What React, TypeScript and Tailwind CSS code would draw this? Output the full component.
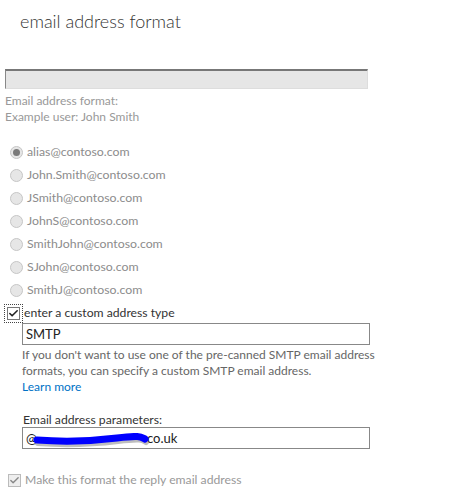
import { Check } from 'lucide-react'

const formats = [
  'alias@contoso.com',
  'John.Smith@contoso.com',
  'JSmith@contoso.com',
  'JohnS@contoso.com',
  'SmithJohn@contoso.com',
  'SJohn@contoso.com',
  'SmithJ@contoso.com',
]

function Radio({ label, checked }: { label: string; checked?: boolean }) {
  return (
    <div className="flex items-center h-[23px]">
      <span className="w-[13px] h-[13px] rounded-full border border-[#c6c6c6] bg-[#e6e6e6] flex items-center justify-center ml-[10px] mr-[4px]">
        {checked && <span className="w-[7px] h-[7px] rounded-full bg-[#7a7a7a]" />}
      </span>
      <span className="text-[12.3px] text-[#8c8c8c]">{label}</span>
    </div>
  )
}

export default function App() {
  return (
    <div
      className="w-[460px] h-[494px] bg-white overflow-hidden relative"
      style={{ fontFamily: 'Lato, "Open Sans", sans-serif' }}
    >
      <h1 className="pl-[20px] pt-[7px] text-[18px] font-light text-[#333] leading-[28px]">
        email address format
      </h1>

      <div className="mt-[34px] ml-[5px] w-[363px] h-[20px] bg-[#e6e6e6] border-t-2 border-l border-t-[#777] border-l-[#888] border-r border-b border-r-[#ddd] border-b-[#ddd]" />

      <div className="pl-[5px] pt-[4px] text-[12px] leading-[16px] text-[#999]">
        <div>Email address format:</div>
        <div>Example user: John Smith</div>
      </div>

      <div className="mt-[16px]">
        {formats.map((f, i) => (
          <Radio key={f} label={f} checked={i === 0} />
        ))}
      </div>

      <div className="flex items-center mt-[1px] h-[20px]">
        <span className="ml-[4px] w-[19px] h-[19px] border border-dotted border-[#444] flex items-center justify-center">
          <span className="w-[13px] h-[13px] border border-[#777] bg-white flex items-center justify-center">
            <Check size={11} strokeWidth={3.5} className="text-[#222]" />
          </span>
        </span>
        <span className="text-[12.2px] text-[#333] ml-[1px]">enter a custom address type</span>
      </div>

      <div className="pl-[22px]">
        <div className="w-[348px] h-[22px] border border-[#888] px-[3px] text-[13px] leading-[20px] text-[#222]">
          SMTP
        </div>
        <p className="text-[12px] leading-[16px] text-[#666] mt-[2px]">
          If you don't want to use one of the pre-canned SMTP email address
          <br />
          formats, you can specify a custom SMTP email address.
        </p>
        <a className="block text-[12px] leading-[16px] text-[#0072c6]">Learn more</a>

        <div className="mt-[18px] text-[12.2px] leading-[14px] text-[#333] pl-[1px]">
          Email address parameters:
        </div>
        <div className="relative w-[348px] h-[22px] border border-[#888] px-[3px] text-[13px] leading-[20px] text-[#222] flex">
          <span className="w-[121px]">@</span>
          <span>co.uk</span>
          <svg className="absolute left-[10px] top-[5px]" width="120" height="16" viewBox="0 0 120 16">
            <path
              d="M5 10 C30 12, 60 11, 85 8 S110 7, 113 9"
              stroke="#444"
              strokeWidth="6"
              fill="none"
              strokeLinecap="round"
              opacity="0.35"
            />
            <path
              d="M4 7 C30 9, 60 8, 84 5 S108 4, 112 6"
              stroke="#0000ff"
              strokeWidth="7"
              fill="none"
              strokeLinecap="round"
            />
          </svg>
        </div>
      </div>

      <div className="flex items-center mt-[22px]">
        <span className="ml-[8px] w-[13px] h-[13px] border border-[#bbb] bg-[#eee] flex items-center justify-center">
          <Check size={11} strokeWidth={3} className="text-[#888]" />
        </span>
        <span className="ml-[4px] text-[12.2px] text-[#999]">Make this format the reply email address</span>
      </div>
    </div>
  )
}
